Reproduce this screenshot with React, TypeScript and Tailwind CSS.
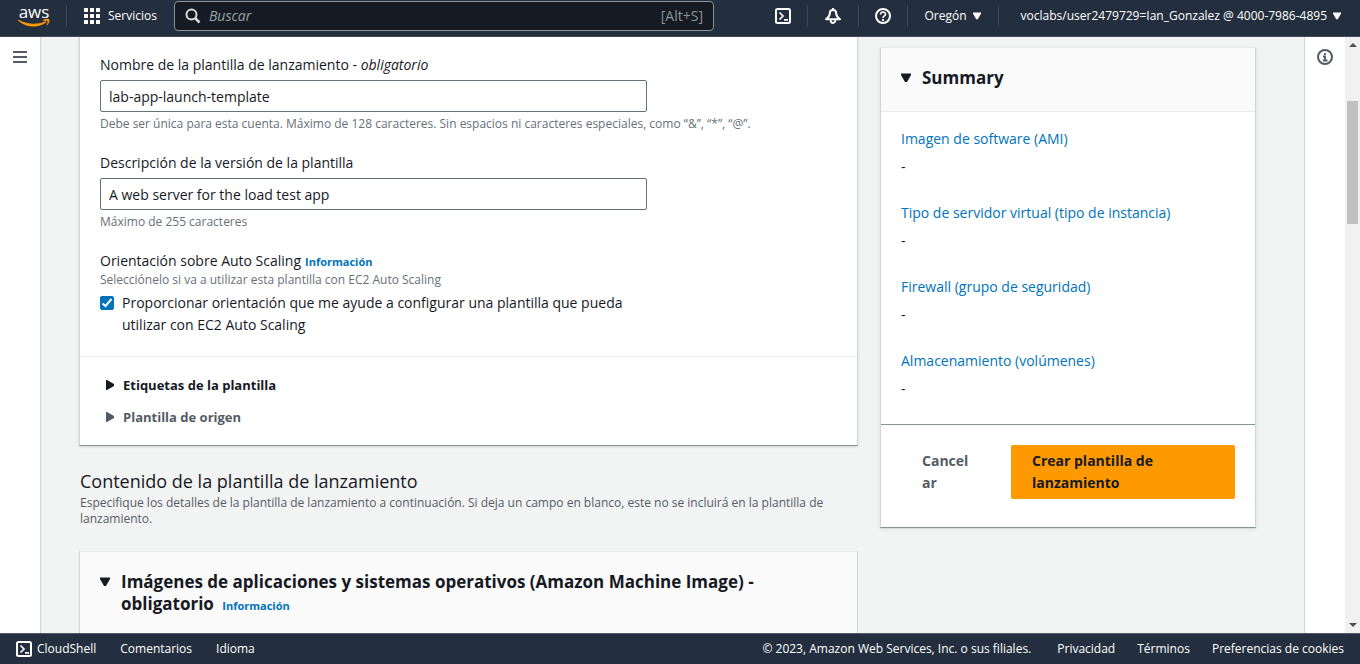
import { useState } from "react";
import type { ReactNode } from "react";

function Caret({ dir, className = "" }: { dir: "down" | "right"; className?: string }) {
  return (
    <svg viewBox="0 0 10 10" className={`shrink-0 fill-current ${className}`} aria-hidden="true">
      {dir === "down" ? <path d="M0 .5h10v1.500L6 9H4L0 2z" /> : <path d="M1 0h1l7 4v2l-7 4H1z" />}
    </svg>
  );
}

function ShellIcon() {
  return (
    <svg viewBox="0 0 16 16" className="size-4 shrink-0" fill="none" stroke="currentColor" strokeWidth="2" aria-hidden="true">
      <rect x="1" y="1" width="14" height="14" rx="1.5" />
      <path d="M4.500 4.500 8 8 4.500 11.500M9 11.800h4" strokeWidth="1.700" />
    </svg>
  );
}

function BellIcon() {
  return (
    <svg viewBox="0 0 16 16" className="size-4" fill="none" stroke="currentColor" strokeWidth="2" strokeLinejoin="round" aria-hidden="true">
      <path d="M8 0v2" />
      <path d="M8 2C5.800 2 4.800 3.600 4.800 5.400 4.800 8 3.300 9.500 1 11.200h14C12.700 9.500 11.200 8 11.200 5.400 11.200 3.600 10.200 2 8 2z" />
      <path d="M5.600 12c0 4 4.800 4 4.800 0" strokeWidth="1.800" />
    </svg>
  );
}

function HelpIcon() {
  return (
    <svg viewBox="0 0 16 16" className="size-4" fill="none" stroke="currentColor" strokeWidth="2" aria-hidden="true">
      <circle cx="8" cy="8" r="7" />
      <path d="M5.500 6.500C5.500 3.200 10.500 3.200 10.500 6.200 10.500 8 8 7.800 8 10" strokeWidth="1.600" />
      <path d="M8 11v2" strokeWidth="1.800" />
    </svg>
  );
}

function InfoIcon() {
  return (
    <svg viewBox="0 0 16 16" className="size-4" fill="none" stroke="currentColor" strokeWidth="2" aria-hidden="true">
      <circle cx="8" cy="8" r="7" />
      <path d="M8 4v2M6 7.500h2V11M6 11.500h4.500" strokeWidth="1.800" />
    </svg>
  );
}

function AwsLogo() {
  return (
    <a href="#inicio" aria-label="Inicio de la consola" className="flex w-8 flex-col items-center text-white">
      <span className="text-[17px] leading-3">aws</span>
      <svg viewBox="0 0 32 8" className="mt-px h-2 w-8" fill="#ff9900" aria-hidden="true">
        <path d="M.4 .8C9 5.600 19.500 5.700 27 2.400c1-.4 1.700.7.8 1.400C20.500 9.200 8.500 9 .1 1.700c-.4-.5-.2-1.100.3-.9z" />
        <path d="M25.300.8c1.800-1.200 5.400-1 5.900-.3.500.7-.2 4.400-2 6-.3.200-.7 0-.5-.3.500-1.300 1.200-3.500.7-4-.4-.6-2.600-.4-3.800-.3-.5.100-.6-.7-.3-1.100z" />
      </svg>
    </a>
  );
}

function Divider() {
  return <span className="h-[22px] w-px bg-[#414750]" />;
}

function Header() {
  return (
    <header className="flex h-[37px] shrink-0 items-center border-b border-[#414d5c] bg-[#232f3e] pr-[19px] pb-1 pl-[18px] text-xs text-white">
      <AwsLogo />
      <span className="w-4" />
      <Divider />
      <button type="button" className="ml-[17px] flex items-center gap-2">
        <svg viewBox="0 0 16 16" className="size-4 fill-current" aria-hidden="true">
          {[0, 6, 12].map((y) =>
            [0, 6, 12].map((x) => <rect key={`${x}-${y}`} x={x} y={y} width="4" height="4" rx="0.500" />),
          )}
        </svg>
        Servicios
      </button>
      <label className="mr-[60px] ml-[17px] flex h-[30px] min-w-0 max-w-[540px] flex-1 items-center rounded-sm border border-[#879596] bg-[#161a22] px-[10px]">
        <svg viewBox="0 0 16 16" className="size-4 shrink-0" fill="none" stroke="#d5dbdb" strokeWidth="2" aria-hidden="true">
          <circle cx="6.500" cy="6.500" r="5" />
          <path d="m10 10 4.500 4.500" strokeWidth="2.500" />
        </svg>
        <input
          type="search"
          aria-label="Buscar"
          placeholder="Buscar"
          className="ml-2 min-w-0 flex-1 bg-transparent text-sm text-white italic outline-none placeholder:text-[#95a5a6]"
        />
        <span className="text-sm text-[#879596]">[Alt+S]</span>
      </label>
      <div className="ml-auto flex items-center">
        <button type="button" aria-label="CloudShell"><ShellIcon /></button>
        <span className="w-4" />
        <Divider />
        <button type="button" aria-label="Notificaciones" className="mx-[17px]"><BellIcon /></button>
        <Divider />
        <button type="button" aria-label="Ayuda" className="mx-4"><HelpIcon /></button>
        <Divider />
        <button type="button" className="mx-[17px] flex items-center gap-[6px]">
          Oregón <Caret dir="down" className="size-2" />
        </button>
        <Divider />
        <button type="button" className="ml-[22px] flex items-center gap-[6px] whitespace-nowrap">
          voclabs/user2479729=Ian_Gonzalez @ 4000-7986-4895 <Caret dir="down" className="size-2" />
        </button>
      </div>
    </header>
  );
}

function InfoLink() {
  return <a href="#informacion" className="text-[11px] leading-4 font-bold text-[#0073bb]">Información</a>;
}

function Hint({ id, children }: { id?: string; children: ReactNode }) {
  return <p id={id} className="text-xs leading-4 text-[#687078]">{children}</p>;
}

function Field({ id, label, value, hint }: { id: string; label: ReactNode; value: string; hint: string }) {
  const [text, setText] = useState(value);
  return (
    <div className="mb-5">
      <label htmlFor={id} className="block">{label}</label>
      <input
        id={id}
        type="text"
        value={text}
        aria-describedby={`${id}-hint`}
        onChange={(e) => setText(e.target.value)}
        className="my-1 block h-8 w-full max-w-[547px] rounded-xs border border-[#687078] bg-white px-2"
      />
      <Hint id={`${id}-hint`}>{hint}</Hint>
    </div>
  );
}

function DetailsCard() {
  const [guided, setGuided] = useState(true);
  return (
    <section className="border-x border-b border-x-[#d0d4d4] border-b-[#879596] bg-white shadow-sm">
      <div className="px-5 pt-[17px] pb-5">
        <Field
          id="nombre"
          label={<>Nombre de la plantilla de lanzamiento - <em>obligatorio</em></>}
          value="lab-app-launch-template"
          hint="Debe ser única para esta cuenta. Máximo de 128 caracteres. Sin espacios ni caracteres especiales, como “&”, “*”, “@”."
        />
        <Field
          id="descripcion"
          label="Descripción de la versión de la plantilla"
          value="A web server for the load test app"
          hint="Máximo de 255 caracteres"
        />
        <div className="flex items-baseline gap-1">
          <span>Orientación sobre Auto Scaling</span>
          <InfoLink />
        </div>
        <Hint>Selecciónelo si va a utilizar esta plantilla con EC2 Auto Scaling</Hint>
        <label className="mt-1 flex max-w-[547px] items-start gap-2">
          <span className="mt-1 grid size-[14px] shrink-0">
            <input
              type="checkbox"
              checked={guided}
              onChange={(e) => setGuided(e.target.checked)}
              className="peer col-start-1 row-start-1 size-[14px] appearance-none rounded-xs border border-[#687078] checked:border-[#0073bb] checked:bg-[#0073bb]"
            />
            <svg viewBox="0 0 14 14" className="pointer-events-none invisible col-start-1 row-start-1 size-[14px] peer-checked:visible" fill="none" stroke="#fff" strokeWidth="2" aria-hidden="true">
              <path d="M2.500 7.500 5.500 10l6-7" />
            </svg>
          </span>
          <span>Proporcionar orientación que me ayude a configurar una plantilla que pueda utilizar con EC2 Auto Scaling</span>
        </label>
      </div>
      <div className="flex flex-col items-start gap-[10px] border-t border-[#eaeded] px-[25px] py-[17px] text-[13px] leading-[22px] font-bold">
        <button type="button" className="flex items-center gap-2">
          <Caret dir="right" className="size-[10px]" /> Etiquetas de la plantilla
        </button>
        <button type="button" className="flex items-center gap-2 text-[#545b64]">
          <Caret dir="right" className="size-[10px]" /> Plantilla de origen
        </button>
      </div>
    </section>
  );
}

const summaryItems = [
  "Imagen de software (AMI)",
  "Tipo de servidor virtual (tipo de instancia)",
  "Firewall (grupo de seguridad)",
  "Almacenamiento (volúmenes)",
];

function Summary() {
  return (
    <aside className="mt-[10px] w-[376px] shrink-0 self-start border border-[#d0d4d4] border-t-[#eaeded] border-b-[#879596] bg-white shadow-sm">
      <h2 className="border-b border-[#eaeded] bg-[#fafafa] px-5 pt-[19px] pb-[22px] text-[17px] leading-[22px] font-bold">
        <button type="button" className="flex items-center gap-[11px]">
          <Caret dir="down" className="size-[10px]" /> Summary
        </button>
      </h2>
      <dl className="flex flex-col gap-6 border-b border-[#879596] px-5 pt-4 pb-6">
        {summaryItems.map((item) => (
          <div key={item} className="flex flex-col gap-[6px]">
            <dt><a href="#resumen" className="text-[#0073bb]">{item}</a></dt>
            <dd>-</dd>
          </div>
        ))}
      </dl>
      <div className="flex items-start gap-[22px] px-5 pt-5 pb-7 font-bold">
        <button type="button" className="w-[88px] py-[5px] pr-4 pl-[21px] text-left break-all text-[#545b64]">Cancelar</button>
        <button type="button" className="flex-1 rounded-xs bg-[#ff9900] px-[21px] py-[5px] text-left text-[#16191f]">
          Crear plantilla de lanzamiento
        </button>
      </div>
    </aside>
  );
}

function Scrollbar() {
  return (
    <div className="flex w-[15px] shrink-0 flex-col items-center bg-[#f1f1f1] pt-[6px] pb-[6px] text-[#505050]" aria-hidden="true">
      <svg viewBox="0 0 8 4" className="h-1 w-2 fill-current"><path d="m0 4 4-4 4 4z" /></svg>
      <span className="mt-[54px] h-[123px] w-[11px] bg-[#c1c1c1]" />
      <svg viewBox="0 0 8 4" className="mt-auto h-1 w-2 fill-current"><path d="m0 0 4 4 4-4z" /></svg>
    </div>
  );
}

function Footer() {
  return (
    <footer className="flex h-[31px] shrink-0 items-center border-t border-[#545b64] bg-[#232f3e] px-4 text-xs text-white">
      <nav className="flex items-center gap-6">
        <button type="button" className="flex items-center gap-[5px]"><ShellIcon /> CloudShell</button>
        <a href="#comentarios">Comentarios</a>
        <a href="#idioma">Idioma</a>
      </nav>
      <div className="ml-auto flex items-center gap-[22px]">
        <span className="mr-1">© 2023, Amazon Web Services, Inc. o sus filiales.</span>
        <a href="#privacidad">Privacidad</a>
        <a href="#terminos">Términos</a>
        <a href="#cookies">Preferencias de cookies</a>
      </div>
    </footer>
  );
}

export default function App() {
  return (
    <div className="flex h-screen flex-col overflow-hidden bg-[#f2f3f3] font-['Open_Sans','Noto_Sans',sans-serif] text-sm leading-[22px] text-[#16191f]">
      <Header />
      <div className="flex min-h-0 flex-1">
        <div className="w-[41px] shrink-0 border-r border-[#d0d4d4] bg-white pt-[14px] pl-[13px] text-[#545b64]">
          <button type="button" aria-label="Abrir navegación" className="block">
            <svg viewBox="0 0 14 12" className="h-3 w-[14px] fill-current" aria-hidden="true">
              <path d="M0 0h14v2H0zM0 5h14v2H0zM0 10h14v2H0z" />
            </svg>
          </button>
        </div>
        <main className="flex min-w-0 flex-1 gap-[22px] overflow-hidden pr-12 pl-[38px]">
          <div className="min-w-0 flex-1">
            <DetailsCard />
            <div className="my-6 px-px">
              <h2 className="text-lg leading-[22px]">Contenido de la plantilla de lanzamiento</h2>
              <p className="mt-[3px] text-xs leading-4 text-[#545b64]">
                Especifique los detalles de la plantilla de lanzamiento a continuación. Si deja un campo en blanco, este no se incluirá en la plantilla de lanzamiento.
              </p>
            </div>
            <section className="border border-[#d0d4d4] border-t-[#eaeded] bg-[#fafafa] px-5 pt-[19px] pb-[60px]">
              <div className="flex items-start gap-[11px]">
                <button type="button" aria-label="Contraer sección" className="mt-[6px]">
                  <Caret dir="down" className="size-[10px]" />
                </button>
                <h2 className="max-w-[660px] text-[17px] leading-[22px] font-bold">
                  Imágenes de aplicaciones y sistemas operativos (Amazon Machine Image) - obligatorio{" "}
                  <span className="ml-1 text-[11px] leading-4"><InfoLink /></span>
                </h2>
              </div>
            </section>
          </div>
          <Summary />
        </main>
        <div className="flex w-[41px] shrink-0 justify-center border-l border-[#d0d4d4] bg-white pt-3 text-[#545b64]">
          <button type="button" aria-label="Abrir ayuda" className="self-start"><InfoIcon /></button>
        </div>
        <Scrollbar />
      </div>
      <Footer />
    </div>
  );
}
